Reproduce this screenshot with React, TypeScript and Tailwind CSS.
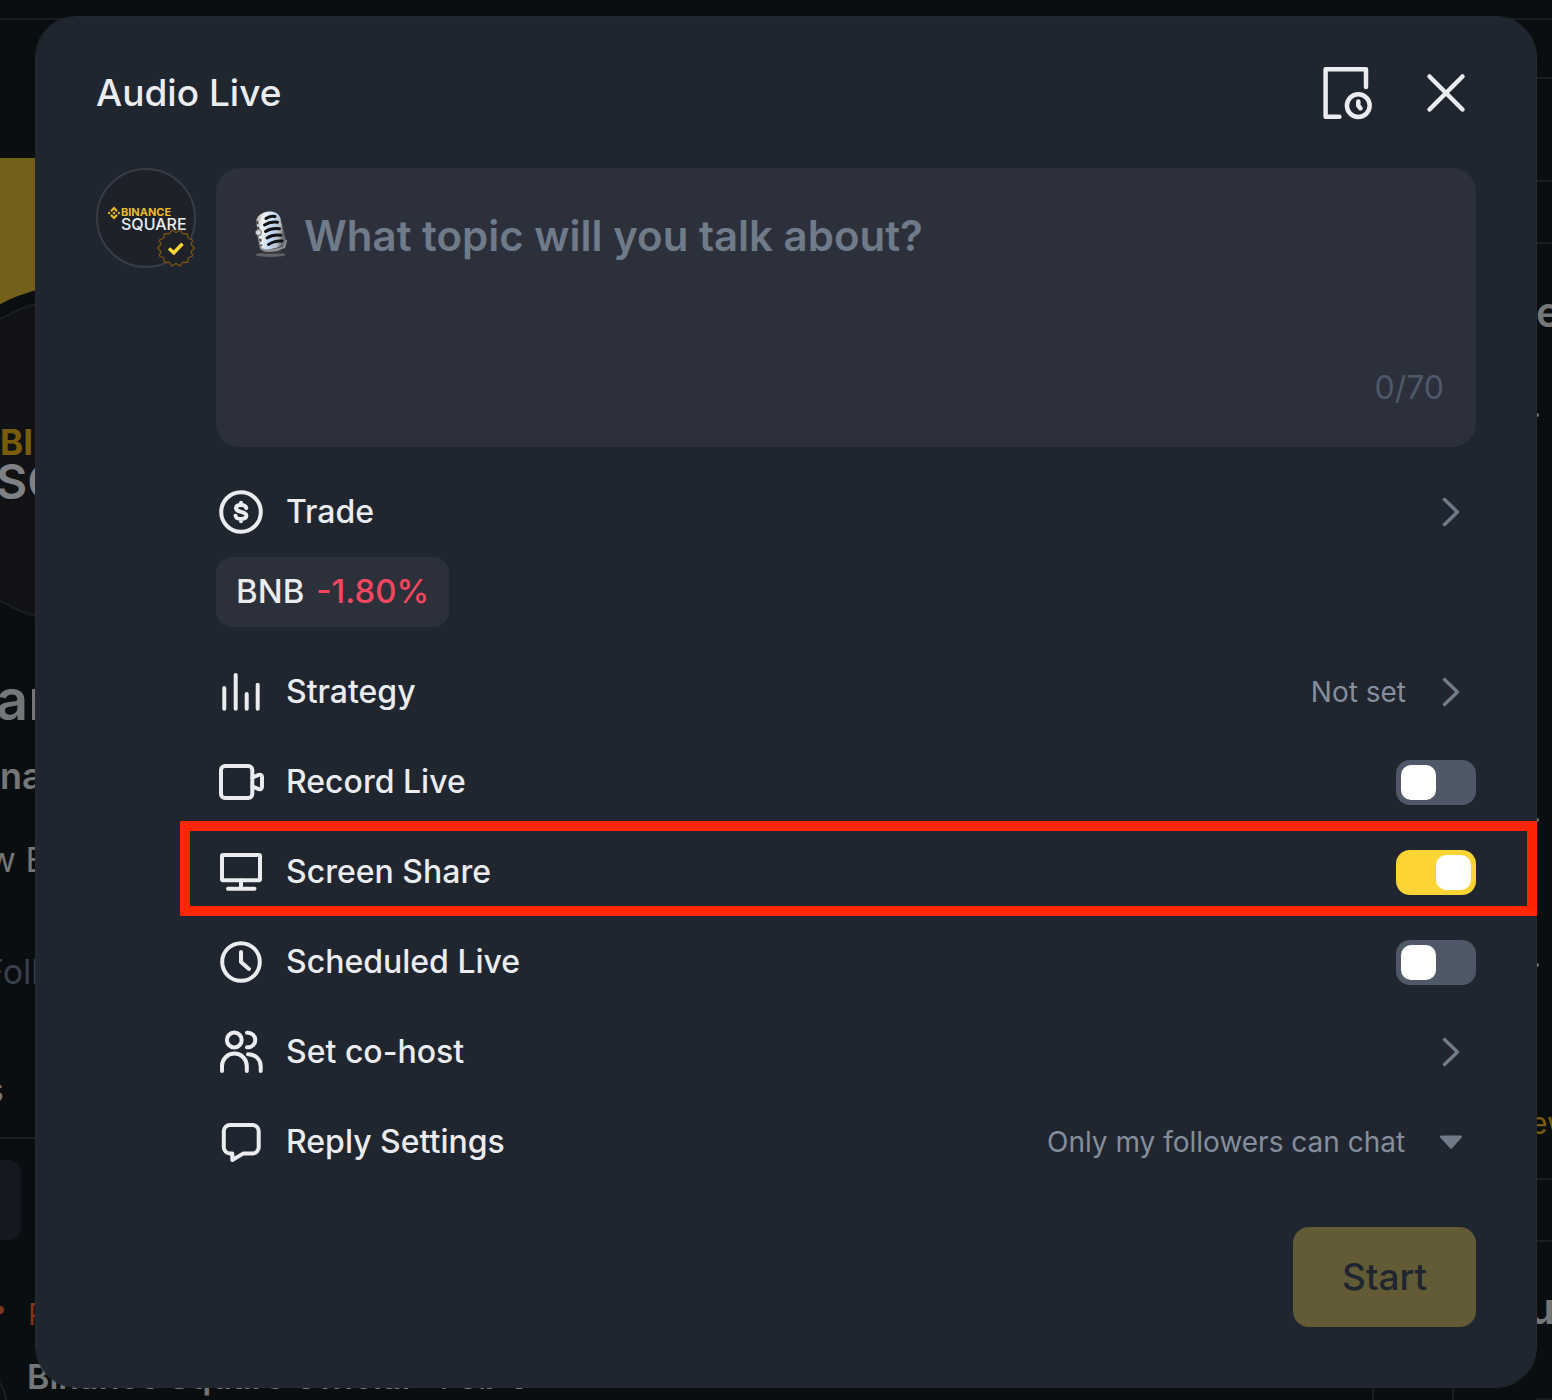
import React, { useState } from 'react';

interface IconProps {
  children: React.ReactNode;
}

function RowIcon({ children }: IconProps) {
  return (
    <svg
      viewBox="0 0 50 50"
      className="w-[50px] h-[50px] shrink-0"
      fill="none"
      stroke="currentColor"
      strokeWidth="4"
      strokeLinecap="round"
      strokeLinejoin="round"
      aria-hidden="true"
    >
      {children}
    </svg>
  );
}

const TradeIcon = () => (
  <RowIcon>
    <circle cx="25" cy="25" r="19.8" />
    <path
      d="M30.300 21C29.800 19 28 18 25 18c-3.200 0-5 1.200-5 3.200 0 4.800 10.400 2.600 10.400 7.400 0 2.200-2.200 3.400-5.300 3.400-3.200 0-5.200-1.200-5.500-3.200M25 15.700v2M25 32.300v2"
      strokeWidth="4"
    />
  </RowIcon>
);

const StrategyIcon = () => (
  <RowIcon>
    <path d="M8.300 21v20.700M19.700 8v33.700M30.700 27v14.700M41.700 17.700v24" />
  </RowIcon>
);

const RecordIcon = () => (
  <RowIcon>
    <rect x="5" y="9" width="31.300" height="32" rx="4" />
    <path d="M36.500 20.500l6.200-2.600c1.600-.5 3.300.3 3.300 2v10.200c0 1.700-1.700 2.500-3.300 2l-6.200-2.600" />
  </RowIcon>
);

const ScreenIcon = () => (
  <RowIcon>
    <rect x="6" y="8" width="38" height="25.300" rx="1" />
    <path d="M25 33.500v8M12 41.700h26.500" />
  </RowIcon>
);

const ClockIcon = () => (
  <RowIcon>
    <circle cx="25" cy="25" r="18.800" />
    <path d="M25 15v10l8 7" />
  </RowIcon>
);

const CohostIcon = () => (
  <RowIcon>
    <circle cx="18.300" cy="13" r="7.400" />
    <path d="M31 5.700h1a7.300 7.300 0 0 1 0 14.600h-1M6 44v-5a12.400 12.400 0 0 1 24.800 0v5M32 27.200c7.300 0 12.700 5.200 12.700 12V44" />
  </RowIcon>
);

const ReplyIcon = () => (
  <RowIcon>
    <path d="M14 8h22.500a6.200 6.200 0 0 1 6.200 6.200v16a6.200 6.200 0 0 1-6.200 6.200H27.500L16.300 43v-6.600H14a6.200 6.200 0 0 1-6.200-6.200v-16A6.200 6.200 0 0 1 14 8z" />
  </RowIcon>
);

const ChevronIcon = () => (
  <svg
    viewBox="0 0 50 50"
    className="w-[50px] h-[50px] shrink-0 text-[#6f7b89]"
    fill="none"
    stroke="currentColor"
    strokeWidth="3.5"
    strokeLinecap="round"
    strokeLinejoin="round"
    aria-hidden="true"
  >
    <path d="M18.500 12.500L31.500 25l-13 12.500" />
  </svg>
);

function Microphone() {
  return (
    <svg viewBox="0 0 36 48" className="w-9 h-12 mt-0.5 shrink-0" aria-hidden="true">
      <defs>
        <linearGradient id="mic-body" x1="0" x2="1" y1="0" y2="0.2">
          <stop offset="0" stopColor="#8f9092" />
          <stop offset="0.25" stopColor="#f4f4f2" />
          <stop offset="0.65" stopColor="#bcd6f8" />
          <stop offset="0.85" stopColor="#b9bcc2" />
          <stop offset="1" stopColor="#6d6f73" />
        </linearGradient>
      </defs>
      <ellipse cx="18.500" cy="44.800" rx="15" ry="2.200" fill="#626267" />
      <path d="M11 44l1-6 16-3 1 9z" fill="#3b3c40" />
      {/* cradle */}
      <path d="M6 22l3 16c4 4 16 3 23-1l2-7" fill="none" stroke="#8d8f93" strokeWidth="2.500" />
      <path d="M4 12C4 6 10 2 17 1.500c6-.3 10 2 11.500 7l5 21c.5 4-2 6-8 8-8 2.300-15 3-16.500-1z" fill="url(#mic-body)" />
      <g stroke="#111317" strokeWidth="3" strokeLinecap="round" fill="none">
        <path d="M14 8.500q4-3 9-2M12.500 15q6-4 13-2.800M13.500 21.500q6-4 14-2.800M15 28q6-4 14-2.800M16.500 34.500q6-4 13.500-3.500" />
      </g>
      <g stroke="#3d3f44" strokeWidth="2" strokeDasharray="3 3" fill="none">
        <path d="M5 11l4.500 25M29.500 10l4 18" />
      </g>
      <circle cx="6.500" cy="22.500" r="3" fill="#d8d9da" stroke="#66686c" />
    </svg>
  );
}

// Outline of the verified badge, teeth evenly spaced round the centre
const badgePoints = Array.from({ length: 28 }, (_, i) => {
  const r = i % 2 ? 18.5 : 15.6;
  const a = (i * Math.PI) / 14;
  return `${(19 + r * Math.sin(a)).toFixed(2)},${(19 - r * Math.cos(a)).toFixed(2)}`;
}).join(' ');

function Avatar() {
  return (
    <div className="relative w-[100px] h-[100px] shrink-0 rounded-full border-2 border-[#373c48] bg-[#1e2228]">
      <div className="flex pt-9 pl-[9px]">
        <svg viewBox="0 0 24 24" className="w-[14px] h-[14px] shrink-0" fill="#e8b92c" aria-hidden="true">
          <path d="M12 1l6.500 6.500-2.600 2.600L12 6.200 8.100 10.100 5.500 7.500zM3.600 9.400L6.200 12l-2.600 2.600L1 12zM20.400 9.400L23 12l-2.600 2.600L17.800 12zM12 9.400l2.600 2.600-2.600 2.600L9.400 12zM8.100 13.900l3.900 3.900 3.900-3.900 2.600 2.600L12 23l-6.500-6.500z" />
        </svg>
        <div className="flex flex-col">
          <span className="text-[11px] leading-[12px] font-bold text-[#e8b92c]">BINANCE</span>
          <span className="text-[16px] leading-[13px] font-medium text-[#eaecef]">SQUARE</span>
        </div>
      </div>
      <svg viewBox="0 0 38 38" className="absolute -right-px -bottom-px w-[38px] h-[38px]" aria-hidden="true">
        <polygon points={badgePoints} fill="#1e2228" stroke="#7d5610" strokeWidth="1.200" strokeLinejoin="round" />
        <path d="M12 19.500l4.800 4.300 8.700-9" fill="none" stroke="#fcd535" strokeWidth="3.400" />
      </svg>
    </div>
  );
}

interface ToggleProps {
  id: string;
  defaultOn?: boolean;
}

function Toggle({ id, defaultOn = false }: ToggleProps) {
  const [on, setOn] = useState(defaultOn);
  return (
    <input
      id={id}
      type="checkbox"
      role="switch"
      checked={on}
      onChange={(e) => setOn(e.target.checked)}
      className="appearance-none w-20 h-[45px] shrink-0 rounded-[14px] bg-[#4f5867] p-[5px] cursor-pointer before:block before:w-[35px] before:h-[35px] before:rounded-[10px] before:bg-white checked:bg-[#fcd535] checked:before:ml-auto"
    />
  );
}

interface RowProps {
  icon: React.ReactNode;
  label: string;
  value?: string;
}

function LinkRow({ icon, label, value }: RowProps) {
  return (
    <button type="button" className="flex items-center gap-5 w-full h-[90px] text-left cursor-pointer">
      {icon}
      <span className="flex-1 text-[32px] font-medium">{label}</span>
      {value && <span className="text-[28px] text-[#848e9c]">{value}</span>}
      <ChevronIcon />
    </button>
  );
}

interface ToggleRowProps {
  id: string;
  icon: React.ReactNode;
  label: string;
  defaultOn?: boolean;
}

function ToggleRow({ id, icon, label, defaultOn }: ToggleRowProps) {
  return (
    <div className="flex items-center gap-5 h-[90px]">
      {icon}
      <label htmlFor={id} className="flex-1 text-[32px] font-medium">
        {label}
      </label>
      <Toggle id={id} defaultOn={defaultOn} />
    </div>
  );
}

function LiveDialog() {
  const [topic, setTopic] = useState('');

  return (
    <section
      role="dialog"
      aria-labelledby="dialog-title"
      className="[grid-area:1/1] self-start z-10 mt-[17px] mb-[13px] ml-9 mr-4 px-[60px] pb-[60px] rounded-[40px] bg-[#202630] outline outline-[#26292f] text-[#eaecef]"
    >
      <header className="flex items-center gap-10 h-[151px]">
        <h1 id="dialog-title" className="flex-1 text-[37px] font-medium">Audio Live</h1>
        <button type="button" aria-label="Scheduled lives" className="cursor-pointer">
          <svg viewBox="0 0 60 60" className="w-[60px] h-[60px]" fill="none" stroke="currentColor" strokeWidth="4.500" strokeLinecap="round" strokeLinejoin="round">
            <path d="M50 24V6.300H9.600v47.400h13.800" />
            <circle cx="42.300" cy="42.600" r="11.400" />
            <path d="M42.300 38.500v4.200l2.200 2.500" />
          </svg>
        </button>
        <button type="button" aria-label="Close" className="cursor-pointer">
          <svg viewBox="0 0 60 60" className="w-[60px] h-[60px]" fill="none" stroke="currentColor" strokeWidth="4.500" strokeLinecap="round">
            <path d="M13.500 13.500l33 33M46.500 13.500l-33 33" />
          </svg>
        </button>
      </header>

      <div className="flex gap-5">
        <Avatar />
        <div className="flex-1 min-w-0">
          {/* Topic */}
          <div className="flex flex-col h-[279px] pl-9 pr-8 pt-10 pb-9 rounded-3xl bg-[#2b303b]">
            <div className="flex flex-1 gap-4">
              <Microphone />
              <textarea
                aria-label="Topic"
                maxLength={70}
                value={topic}
                onChange={(e) => setTopic(e.target.value)}
                placeholder="What topic will you talk about?"
                className="flex-1 resize-none outline-none text-[42px] leading-[56px] font-semibold placeholder:text-[#6f7b89]"
              />
            </div>
            <span className="self-end text-[32px] leading-[46px] text-[#4f5867]">{topic.length}/70</span>
          </div>

          {/* Settings */}
          <div className="mt-5">
            <LinkRow icon={<TradeIcon />} label="Trade" />
            <div className="inline-flex items-center gap-3 h-[70px] px-5 mb-5 rounded-2xl bg-[#2b303b] text-[33px] font-medium align-top">
              <span>BNB</span>
              <span className="text-[#f6465d]">-1.80%</span>
            </div>
            <LinkRow icon={<StrategyIcon />} label="Strategy" value="Not set" />
            <ToggleRow id="record" icon={<RecordIcon />} label="Record Live" />
            <div className="relative">
              <ToggleRow id="share" icon={<ScreenIcon />} label="Screen Share" defaultOn />
              <div className="absolute -top-[6px] bottom-px -left-9 -right-[61px] border-[10px] border-[#ff2600] pointer-events-none" />
            </div>
            <ToggleRow id="schedule" icon={<ClockIcon />} label="Scheduled Live" />
            <LinkRow icon={<CohostIcon />} label="Set co-host" />
            <div className="flex items-center gap-5 h-[90px]">
              <ReplyIcon />
              <label htmlFor="reply" className="flex-1 text-[32px] font-medium">Reply Settings</label>
              <select id="reply" className="appearance-none outline-none bg-transparent text-[28px] text-[#848e9c] cursor-pointer">
                <option>Only my followers can chat</option>
              </select>
              <svg viewBox="0 0 50 50" className="w-[50px] h-[50px] shrink-0" fill="#6f7b89" aria-hidden="true">
                <path d="M15.500 18.500h19c1.500 0 2 1.200 1 2.200L26 31.300q-1 1-2 0L14.500 20.700c-1-1-.5-2.200 1-2.200z" />
              </svg>
            </div>
          </div>
        </div>
      </div>

      <footer className="flex justify-end mt-10">
        <button type="button" disabled className="w-[183px] h-[100px] rounded-2xl bg-[#625b35] text-[37px] font-medium text-[#202630]">
          Start
        </button>
      </footer>
    </section>
  );
}

// Dimmed profile page that shows round the dialog
function PageBehind() {
  return (
    <div className="[grid-area:1/1] h-0 min-h-full overflow-hidden flex flex-col whitespace-nowrap text-[#757677]" aria-hidden="true">
      <div className="h-5 shrink-0 border-b-2 border-[#1a1d24]" />
      <div className="flex flex-1 justify-between">
        <div className="w-9 pt-[138px]">
          <div className="h-[170px] bg-[#73601b]" />
          <div className="relative -mt-11 -ml-[94px] w-[352px] h-[352px] rounded-full border-[12px] border-[#0a0e10] bg-[#101216]">
            <div className="h-full rounded-full border-2 border-[#1c1f22] pl-20 pt-[124px]">
              <div className="text-[35px] leading-[40px] font-bold text-[#7a5d0b]">BINANCE</div>
              <div className="-ml-1 text-[48px] leading-[40px] font-semibold text-[#808184]">SQUARE</div>
            </div>
          </div>
          <div className="h-[76px] mt-6 -ml-1 text-[56px] leading-[80px] font-semibold">ar</div>
          <div className="h-[84px] text-[36px] leading-[80px] font-semibold">na</div>
          <div className="h-[80px] -ml-3 text-[34px] leading-[80px]">w B</div>
          <div className="h-[110px] -ml-4 text-[34px] leading-[144px] text-[#3a404b]">Foll</div>
          <div className="h-[127px] -ml-3.5 text-[34px] leading-[160px]">s</div>
          <div className="h-[2px] bg-[#1a1d22]" />
          <div className="h-20 w-[21px] mt-[21px] rounded-r-xl bg-[#14181f]" />
          <div className="flex items-center gap-6 h-[112px] pt-9 text-[30px] text-[#7e3520]">
            <i className="block w-2 h-2 -ml-1 mb-2 shrink-0 rounded-full bg-current" />P
          </div>
          <div className="flex gap-5 -ml-[73px] text-[34px] leading-[50px]">
            <div className="w-20 h-20 mt-3 shrink-0 rounded-full border-2 border-[#1c1f22]" />
            <span><b className="font-semibold">Binance Square Official</b> · Feb 6</span>
          </div>
        </div>
        {/* Feed columns, only their feet show */}
        <div className="flex-1 flex justify-end pr-[82px]">
          <div className="w-[82px] border-x-2 border-[#1a1d22]" />
        </div>
        <div className="w-4">
          <div className="h-[59px] border-b-2 border-[#1a1d24]" />
          <div className="h-[103px] border-b-2 border-[#1a1d24]" />
          <div className="h-[62px] border-b-2 border-[#1a1d24]" />
          <div className="h-[102px] text-[42px] leading-[136px] font-semibold">e</div>
          <div className="h-[405px] -ml-px pt-[67px]"><i className="block w-1 h-1 rounded-full bg-current" /></div>
          <div className="h-[145px] -ml-px pt-[67px]"><i className="block w-1 h-1 rounded-full bg-current" /></div>
          <div className="h-[182px] -ml-px pt-[67px]"><i className="block w-1 h-1 rounded-full bg-current" /></div>
          <div className="h-[100px] -ml-1.5 text-[30px] leading-[90px] text-[#7a5d0b]">ew</div>
          <div className="h-[2px] bg-[#1a1d22]" />
          <div className="h-[62px] border-b-2 border-[#1a1d22]" />
          <div className="h-[156px] -ml-2 text-[44px] leading-[132px] font-semibold">u</div>
          <div className="h-[2px] bg-[#1a1d22]" />
        </div>
      </div>
    </div>
  );
}

export default function App() {
  return (
    <main className="grid min-h-screen overflow-hidden bg-[#0a0e10] font-['Inter','Noto_Sans',sans-serif]">
      <PageBehind />
      <LiveDialog />
    </main>
  );
}
